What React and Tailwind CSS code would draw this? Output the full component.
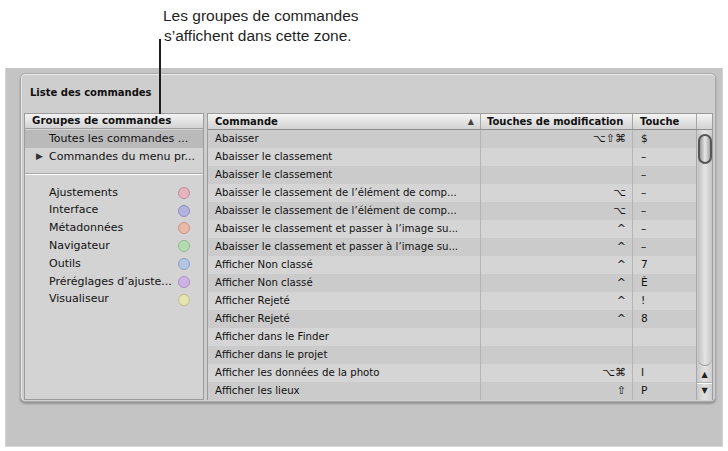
import React from 'react';

const ui = { fontFamily: '"Lucida Grande", "DejaVu Sans", sans-serif' };

const groups = [
  { name: 'Ajustements', fill: 'bg-[#e6b3c1]', ring: 'border-[#c48a9a]' },
  { name: 'Interface', fill: 'bg-[#b3b3e0]', ring: 'border-[#8f8fc0]' },
  { name: 'Métadonnées', fill: 'bg-[#e8b8a8]', ring: 'border-[#c79483]' },
  { name: 'Navigateur', fill: 'bg-[#b3dcb3]', ring: 'border-[#8dbb8d]' },
  { name: 'Outils', fill: 'bg-[#b1c6e4]', ring: 'border-[#8aa3c5]' },
  { name: 'Préréglages d’ajuste...', fill: 'bg-[#d0b3e6]', ring: 'border-[#ad8dc6]' },
  { name: 'Visualiseur', fill: 'bg-[#e3e3b3]', ring: 'border-[#c0c08c]' },
];

const rows = [
  ['Abaisser', '⌥⇧⌘', '$'],
  ['Abaisser le classement', '', '–'],
  ['Abaisser le classement', '', '–'],
  ['Abaisser le classement de l’élément de comp...', '⌥', '–'],
  ['Abaisser le classement de l’élément de comp...', '⌥', '–'],
  ['Abaisser le classement et passer à l’image su...', '^', '–'],
  ['Abaisser le classement et passer à l’image su...', '^', '–'],
  ['Afficher Non classé', '^', '7'],
  ['Afficher Non classé', '^', 'È'],
  ['Afficher Rejeté', '^', '!'],
  ['Afficher Rejeté', '^', '8'],
  ['Afficher dans le Finder', '', ''],
  ['Afficher dans le projet', '', ''],
  ['Afficher les données de la photo', '⌥⌘', 'I'],
  ['Afficher les lieux', '⇧', 'P'],
];

const headerBg = 'bg-gradient-to-b from-[#f4f4f4] to-[#d2d2d2]';

const GroupList = () => (
  <div className="w-[180px] h-[287px] border border-[#9c9c9c] bg-[#d3d3d3] flex flex-col">
    <div className={`h-[15px] ${headerBg} border-b border-[#a0a0a0] pl-[7px] flex items-center text-[10.3px] font-bold text-[#111]`}>
      Groupes de commandes
    </div>
    <div className="h-[18px] mt-[1px] bg-[#bababa] pl-[24px] flex items-center text-[11px] text-[#111]">
      Toutes les commandes ...
    </div>
    <div className="h-[18px] flex items-center text-[11px] text-[#111]">
      <span className="w-[24px] pl-[11px] text-[9px] text-[#333]">▶</span>
      Commandes du menu pr...
    </div>
    <div className="mt-[7px] border-t border-[#a9a9a9] border-b-white border-b h-[2px]" />
    <div className="mt-[9px] flex flex-col">
      {groups.map((g) => (
        <div key={g.name} className="h-[17.8px] pl-[24px] pr-[13px] flex items-center justify-between text-[11px] text-[#111]">
          <span>{g.name}</span>
          <span className={`w-[12px] h-[12px] rounded-full border ${g.fill} ${g.ring}`} />
        </div>
      ))}
    </div>
  </div>
);

const Scrollbar = () => (
  <div className="w-[16px] border-l border-[#a8a8a8] bg-gradient-to-r from-[#c9c9c9] via-[#e2e2e2] to-[#cfcfcf] flex flex-col">
    <div className="relative mx-auto mt-[4px] w-[14px] h-[232px] rounded-b-[7px] bg-gradient-to-r from-[#c2c2c2] via-[#e4e4e4] to-[#c6c6c6] border-b border-[#9a9a9a]">
      <div className="absolute left-0 top-[0px] w-[14px] h-[30px] rounded-[7px] border-[2px] border-[#555] bg-gradient-to-r from-[#9a9a9a] via-[#e8e8e8] to-[#a4a4a4]" />
    </div>
    <div className="flex-1 flex flex-col items-center justify-center text-[8px] text-[#222] leading-none">
      <div className="h-[14px] flex items-center">▲</div>
      <div className="w-full border-t border-[#b0b0b0] border-b border-b-white h-[2px]" />
      <div className="h-[14px] flex items-center">▼</div>
    </div>
  </div>
);

const CommandTable = () => (
  <div className="w-[506px] h-[287px] border border-[#9c9c9c] flex flex-col">
    <div className={`h-[16px] ${headerBg} border-b border-[#8e8e8e] flex text-[10px] font-bold text-[#111]`}>
      <div className="w-[273px] pl-[7px] pr-[6px] flex items-center justify-between border-r border-[#a6a6a6]">
        <span>Commande</span>
        <span className="text-[8px] text-[#444]">▲</span>
      </div>
      <div className="w-[152px] pl-[6px] flex items-center border-r border-[#a6a6a6]">Touches de modification</div>
      <div className="w-[64px] pl-[7px] flex items-center border-r border-[#a6a6a6]">Touche</div>
      <div className="flex-1" />
    </div>
    <div className="flex-1 flex">
      <div className="flex-1 flex flex-col">
        {rows.map((r, i) => (
          <div
            key={i}
            className={`h-[18px] flex text-[10.2px] text-[#111] ${i % 2 === 0 ? 'bg-[#cbcbcb]' : 'bg-[#d5d5d5]'}`}
          >
            <div className="w-[273px] pl-[7px] flex items-center border-r border-[#b4b4b4] whitespace-nowrap overflow-hidden">{r[0]}</div>
            <div className="w-[152px] pr-[6px] flex items-center justify-end border-r border-[#b4b4b4] text-[11px]">{r[1]}</div>
            <div className="flex-1 pl-[8px] flex items-center text-[10.6px]">{r[2]}</div>
          </div>
        ))}
      </div>
      <Scrollbar />
    </div>
  </div>
);

export default function App() {
  return (
    <div className="relative w-[728px] h-[451px] bg-white overflow-hidden" style={ui}>
      <div
        className="h-[68px] pt-[6px] pl-[163px] text-[15.5px] leading-[20px] text-[#1f1f1f]"
        style={{ fontFamily: '"Liberation Sans", Arial, sans-serif' }}
      >
        <div>Les groupes de commandes</div>
        <div className="pl-[1px]">s’affichent dans cette zone.</div>
      </div>

      <div className="ml-[5px] w-[718px] h-[379px] bg-[#c4c4c4] border-l border-[#d6d6d6] border-r border-r-[#d2d2d2] border-b border-b-[#d8d8d8] pt-[5px] pl-[14px]">
        <div className="w-[696px] h-[329px] rounded-[5px] bg-[#cecece] border border-[#a9a9a9] shadow-[0_2px_2px_rgba(0,0,0,0.25),inset_0_1px_0_#ececec,inset_1px_0_0_#e6e6e6] pl-[3px] pt-[12px]">
          <div className="pl-[6px] h-[27px] text-[10px] font-bold text-[#111] leading-[14px]">Liste des commandes</div>
          <div className="flex gap-[3px]">
            <GroupList />
            <CommandTable />
          </div>
        </div>
      </div>

      <div className="absolute left-[159px] top-[39px] w-[2px] h-[75px] bg-[#1e1e1e]" />
    </div>
  );
}
